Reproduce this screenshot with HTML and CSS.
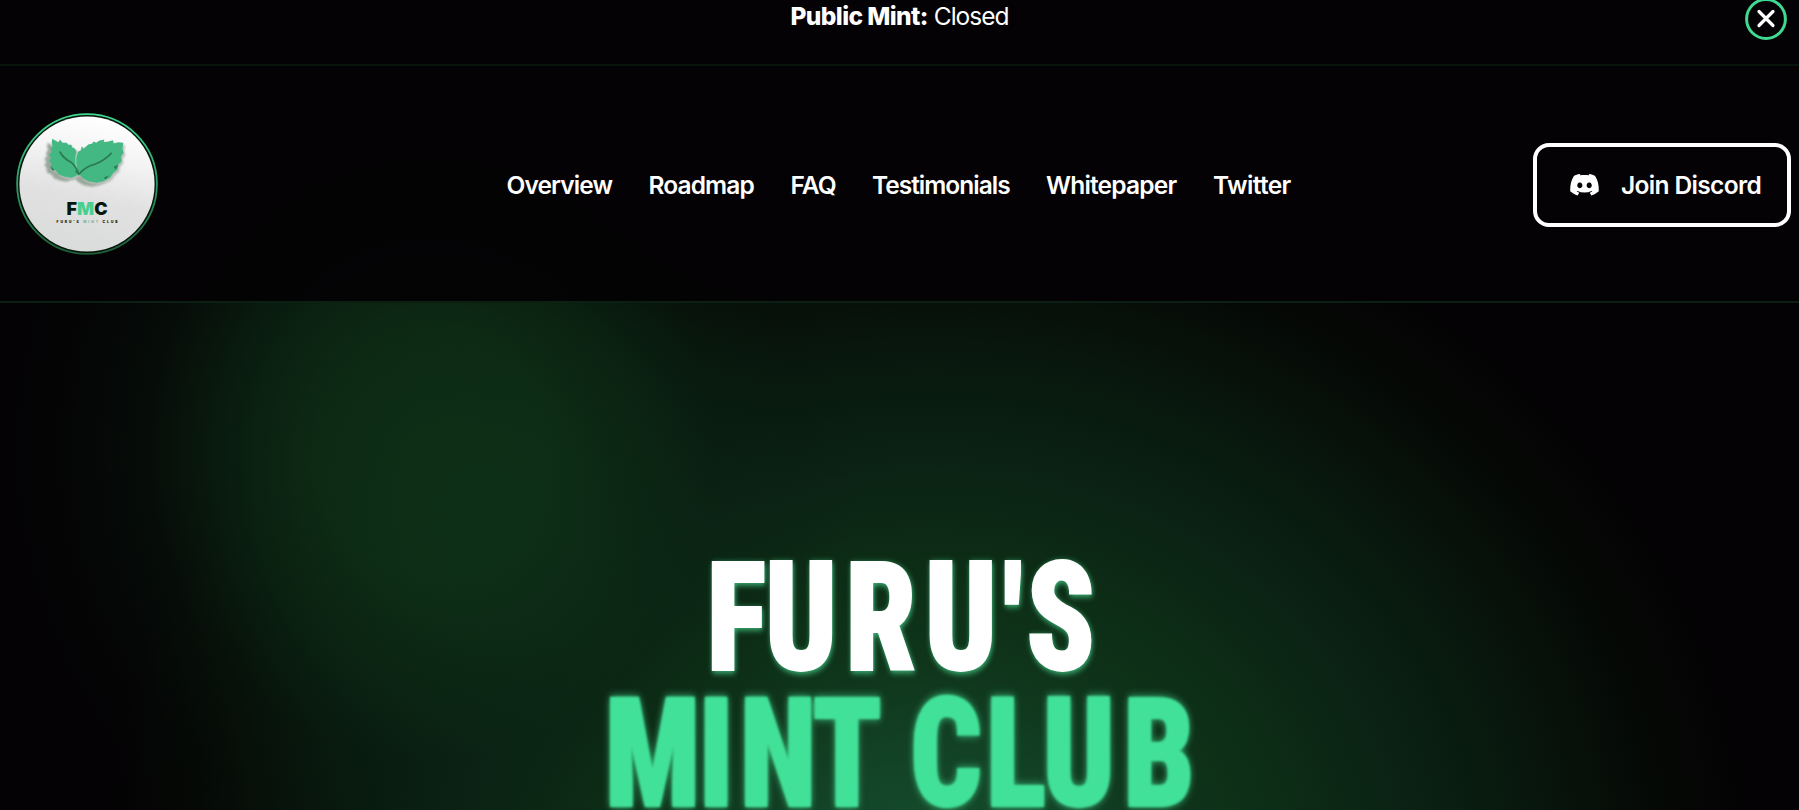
FILE: index.html
```
<!DOCTYPE html>
<html lang="en">
<head>
<meta charset="utf-8">
<title>Furu's Mint Club</title>
<link rel="stylesheet" href="styles.css">
</head>
<body>
<div class="announcement">
  <p class="announcement-text"><strong>Public Mint:</strong> <span>Closed</span></p>
  <button class="close" aria-label="Close">
    <svg viewBox="0 0 42 42"><circle cx="21" cy="21" r="19.4" fill="none" stroke="#3fd991" stroke-width="3"/><path d="M14 13.5 28 27.500M28 13.5 14 27.500" stroke="#fff" stroke-width="3.200" stroke-linecap="round"/></svg>
  </button>
</div>
<header class="header">
  <a class="logo" href="#">
    <svg viewBox="16 113 142 142">
      <defs>
        <linearGradient id="disc" x1="0.6" y1="0" x2="0.4" y2="1"><stop offset="0" stop-color="#fff"/><stop offset=".28" stop-color="#f4f4f4"/><stop offset=".6" stop-color="#e1e1e1"/><stop offset="1" stop-color="#d9dcda"/></linearGradient>
        <linearGradient id="ring" x1="0" y1="0" x2="0" y2="1"><stop offset="0" stop-color="#3fd991"/><stop offset="1" stop-color="#1c5c36"/></linearGradient>
        <g id="leaves">
          <path d="M52 28 62 34 70 38 75 30 82 40 95 40 100 46 109 46 112 54 120 58 124 66 121 80 123 100 132 134 110 145 90 142 72 135 62 122 50 118 48 102 42 94 48 86 42 76 50 68 47 58 53 50 50 40Z"/>
          <path d="M265 40 262 58 266 70 258 80 260 95 250 105 248 120 235 130 225 145 205 155 185 160 160 155 142 145 133 134 122 110 121 90 128 68 138 62 140 50 146 58 160 45 172 42 175 36 184 40 192 34 208 30 206 38 220 36 234 32 236 42 250 38Z"/>
        </g>
        <filter id="soft" x="-20%" y="-20%" width="140%" height="140%"><feGaussianBlur stdDeviation="3.500"/></filter>
      </defs>
      <circle cx="87" cy="184" r="69.9" fill="#04140a" stroke="url(#ring)" stroke-width="1.8"/>
      <circle cx="87" cy="184" r="67.6" fill="url(#disc)"/>
      <g transform="translate(35 129.500) scale(.33333)">
        <use href="#leaves" x="-14" y="12" fill="#9aa79c" filter="url(#soft)"/>
        <use href="#leaves" x="5" y="7" fill="#b4bdb6" filter="url(#soft)"/>
        <use href="#leaves" fill="#43b882"/>
        <path d="M128 68C120 82 120 108 130 130" fill="none" stroke="#9ddcc0" stroke-width="3"/>
        <path d="M74 66Q86 88 108 98Q124 112 132 134Q150 112 180 104Q210 92 230 70M132 134 122 124" fill="none" stroke="#2c7a50" stroke-width="5"/>
        <path d="M44 108 60 122 52 122ZM236 112 250 106 242 120ZM206 144 222 138 212 150Z" fill="#2c7a50"/>
      </g>
      <text class="logo-mark" x="66.6" y="214.8" textLength="41" lengthAdjust="spacingAndGlyphs"><tspan fill="#06180e">F</tspan><tspan fill="#49cf90">M</tspan><tspan fill="#06180e">C</tspan></text>
      <text class="logo-name" x="56.5" y="222.6" textLength="61" lengthAdjust="spacing"><tspan fill="#0b1f14">FURU'S</tspan><tspan fill="#86b79d"> MINT</tspan><tspan fill="#0b1f14"> CLUB</tspan></text>
    </svg>
  </a>
  <nav class="nav">
    <a href="#">Overview</a><a href="#">Roadmap</a><a href="#">FAQ</a><a href="#">Testimonials</a><a href="#">Whitepaper</a><a href="#">Twitter</a>
  </nav>
  <a class="discord" href="#">
    <svg viewBox="0 0 29 22"><path fill="#fff" fill-rule="evenodd" d="M10.2.6 9.7 0C7.6.3 5.500 1 3.900 2 1.200 6 0 11 .2 17.300c2.200 2 4.600 3.300 7.400 4.100l1.700-2.600-2.600-1.400.6-.5c4.700 2 9.700 2 14.400 0l.6.500-2.600 1.400 1.700 2.600c2.800-.8 5.200-2.100 7.400-4.100C29 11 27.800 6 25.100 2 23.500 1 21.400.3 19.300 0l-.7 1.200c-2.800-.4-5.500-.4-8.300 0ZM9.800 8.500a2.600 2.900 0 1 0 .01 0ZM19.200 8.500a2.600 2.900 0 1 0 .01 0Z"/></svg>
    <span>Join Discord</span>
  </a>
</header>
<main class="hero">
  <h1 class="title">
    <svg viewBox="0 0 640 270">
      <g transform="scale(.825 1)">
        <text class="line line-white" y="130.300" dy="0 0 0 0 5 -5" x="153.200 224 321.500 417.500 512.500 540.500">FURU'S</text>
        <text class="line line-green" y="266" x="30 143.500 193.500 281.500 334 400 492 560.500 658.500">MINT CLUB</text>
      </g>
    </svg>
  </h1>
</main>
</body>
</html>
```
FILE: styles.css
```
* { box-sizing: border-box; }

body {
  margin: 0;
  height: 810px;
  overflow: hidden;
  display: flex;
  flex-direction: column;
  color: #fff;
  font-family: Inter, sans-serif;
  background:
    radial-gradient(ellipse 430px 470px at 430px 450px, rgba(16, 56, 26, .78) 0, rgba(15, 53, 25, .76) 27%, rgba(13, 46, 22, .6) 47%, rgba(10, 34, 18, .33) 66%, rgba(8, 24, 14, .11) 85%, transparent 100%),
    radial-gradient(ellipse 830px 740px at 930px 890px, #17512f 0, #134427 17%, #0f351b 31%, #0d2e16 42%, #0b2414 56%, #08160d 74%, #050805 89%, #040204 100%);
}

a { color: inherit; text-decoration: none; }

.announcement {
  height: 66px;
  display: grid;
  grid-template-columns: 1fr auto 1fr;
  align-items: start;
  background: #040204;
  border-bottom: 2px solid #07140c;
}

.announcement-text {
  grid-column: 2;
  margin: 0;
  padding-top: 1px;
  font-size: 24.500px;
  line-height: 30px;
  letter-spacing: -1px;
}

.announcement-text strong { font-weight: 800; letter-spacing: -.6px; }

.close {
  justify-self: end;
  width: 42px;
  height: 42px;
  margin: -2px 12px 0 0;
  padding: 0;
  border: 0;
  background: none;
}

.close svg { display: block; }

.header {
  height: 237px;
  display: grid;
  grid-template-columns: 490.500px 1fr auto;
  align-items: center;
  padding: 2px 8px 0 16px;
  background: rgba(4, 2, 4, .94);
  border-bottom: 2px solid #0b2013;
}

.logo, .logo svg { display: block; width: 142px; height: 142px; }

.logo { margin-top: -2px; }

.logo-mark { font: 900 17px Inter, sans-serif; }

.logo-name { font: 900 3.4px Inter, sans-serif; }

.nav {
  display: flex;
  gap: 36.500px;
  font-size: 24.500px;
  font-weight: 600;
  line-height: 30px;
  letter-spacing: -.9px;
}

.nav a:nth-child(n + 1) { width: 105.500px; white-space: nowrap; }
.nav a:nth-child(3) { width: 45px; }
.nav a:nth-child(4) { width: 137.500px; letter-spacing: -1px; }
.nav a:nth-child(5) { width: 130.500px; letter-spacing: -.8px; }
.nav a:nth-child(6) { width: 78px; letter-spacing: -.65px; }

.discord {
  width: 258px;
  height: 84px;
  display: flex;
  align-items: center;
  gap: 22px;
  padding-left: 33px;
  border: 4px solid #fff;
  border-radius: 16px;
  font-size: 24.500px;
  font-weight: 600;
  letter-spacing: -.65px;
}

.discord svg { width: 29px; height: 22px; }

.hero { flex: 1; padding-top: 237px; }

.title { width: 640px; height: 270px; margin: 0 0 0 580px; }

.title svg { display: block; width: 640px; height: 270px; overflow: visible; }

.line {
  font-family: "Roboto Condensed", Roboto, sans-serif;
  font-stretch: 75%;
  font-size: 152.500px;
  font-weight: 900;
  stroke-width: 1.800px;
}

.line-white { fill: #fff; stroke: #fff; filter: drop-shadow(1px 2px 3px #3fbd7c); }

.line-green { fill: #42e199; stroke: #42e199; filter: blur(1.300px) drop-shadow(0 0 4px #3cc583); }
```
